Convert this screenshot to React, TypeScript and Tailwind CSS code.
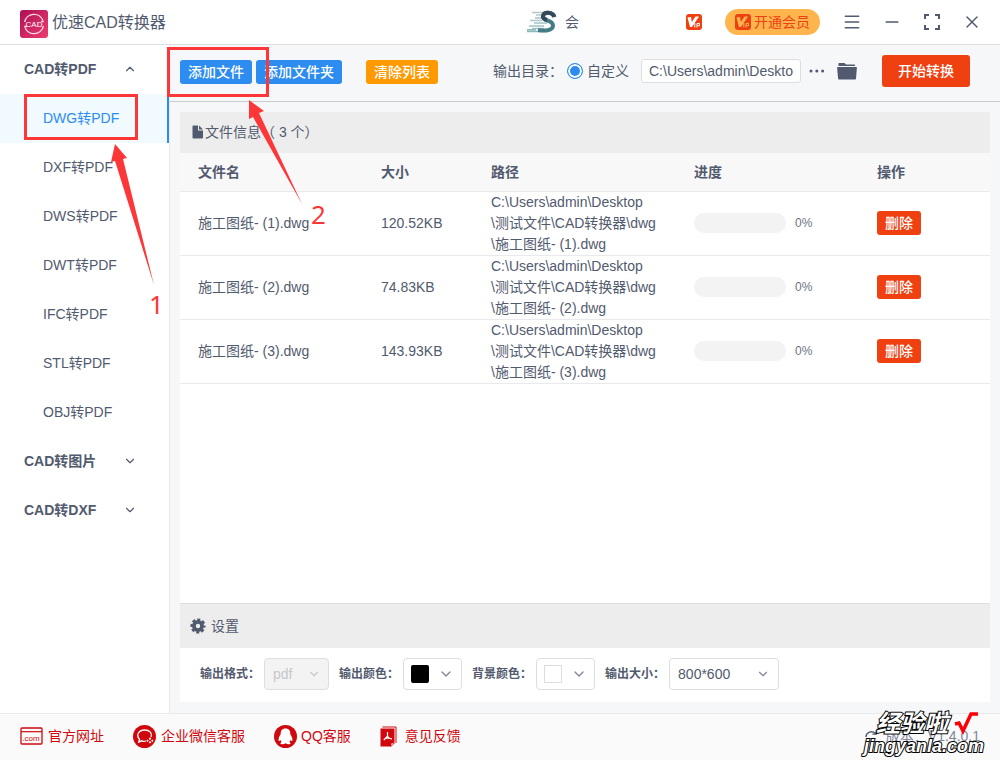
import React from "react";
import { ChevronDown, ChevronUp, Menu, Minus, X } from "lucide-react";

const formats = ["DWG转PDF", "DXF转PDF", "DWS转PDF", "DWT转PDF", "IFC转PDF", "STL转PDF", "OBJ转PDF"];

const files = [
  { name: "施工图纸- (1).dwg", size: "120.52KB", progress: 0 },
  { name: "施工图纸- (2).dwg", size: "74.83KB", progress: 0 },
  { name: "施工图纸- (3).dwg", size: "143.93KB", progress: 0 },
];

const AppLogo = () => (
  <svg width="28" height="28" viewBox="0 0 28 28" className="mt-[3px]" aria-hidden="true">
    <defs>
      <linearGradient id="logo" x1="0" y1="0" x2="1" y2="1">
        <stop offset="0" stopColor="#ad0f55" />
        <stop offset="1" stopColor="#ee3d70" />
      </linearGradient>
    </defs>
    <rect width="28" height="28" rx="3" fill="url(#logo)" />
    <g fill="none" stroke="#fbdce6" strokeWidth="1.3">
      <path d="M4.600 12A9.600 9.600 0 0 1 23 10.500M23.400 16A9.600 9.600 0 0 1 5 17.500" />
      <path d="M21 11.500h2.800M7 16.500H4.200" />
    </g>
    <text x="14" y="17" textAnchor="middle" fontSize="8" fill="#fff">
      CAD
    </text>
  </svg>
);

const Avatar = () => (
  <svg width="30" height="24" viewBox="0 0 30 24" aria-hidden="true">
    <g strokeWidth="1.4" fill="none">
      <path d="M5 2.500h14M9 5h8M3 10.500h12" stroke="#b9c6c9" />
      <path d="M8 8h7M7 13h13M2 16h15M5 18.500h12" stroke="#a4c2c6" />
      <path d="M0 21.500h20M0 19.800h9" stroke="#8fb8bc" />
    </g>
    <path d="M27 7C26 2 16 1 16 6.500C16 11.500 26 10 26 15.500C26 21 17 21 11 20" fill="none" stroke="#447d86" strokeWidth="4" />
    <path d="M27.500 7C26 2 16 1 16 6.500C16 8.500 18 9.500 20 10" fill="none" stroke="#34495a" strokeWidth="4" />
  </svg>
);

const VipIcon = ({ cut }: { cut: string }) => (
  <svg width="16" height="16" viewBox="0 0 16 16" aria-hidden="true">
    <rect width="16" height="16" rx="3" fill="#ef4012" />
    <path d="M1.500 3.500L5 3l.8 5L9.500 2.500h3.500L6 13H4z" fill={cut} />
    <path d="M8.800 9v4.500M11 13.500V9.500h2.500v2.200H11" stroke={cut} strokeWidth="1" fill="none" />
  </svg>
);

const ExpandIcon = () => (
  <svg width="16" height="16" viewBox="0 0 16 16" fill="none" stroke="currentColor" strokeWidth="2" aria-hidden="true">
    <path d="M1 5V1h4M11 1h4v4M15 11v4h-4M5 15H1v-4" />
  </svg>
);

const FolderIcon = () => (
  <svg width="20" height="18" viewBox="0 0 20 18" fill="currentColor" aria-hidden="true">
    <path d="M1.500 4V1.500Q1.500 1 2 1h5.500l1.500 1.500h8.500q.5 0 .5.500v1z" />
    <path d="M.7 5h18.600q.7 0 .6.700L19 16.700q-.1.800-.9.800H2q-.8 0-.9-.8L.100 5.700Q0 5 .700 5z" />
  </svg>
);

const FileIcon = () => (
  <svg width="12" height="14" viewBox="0 0 12 14" fill="currentColor" aria-hidden="true">
    <path d="M1.500.500H6V5.500h5V12.500q0 1-1 1H1.500q-1 0-1-1v-11q0-1 1-1zM7 .500L11 4.500H7z" />
  </svg>
);

const GearIcon = () => (
  <svg width="16" height="16" viewBox="0 0 16 16" aria-hidden="true">
    <circle cx="8" cy="8" r="4.100" fill="none" stroke="currentColor" strokeWidth="3.800" />
    <circle cx="8" cy="8" r="6.400" fill="none" stroke="currentColor" strokeWidth="2.400" strokeDasharray="3 2.026" strokeDashoffset="1.500" />
  </svg>
);

const SiteIcon = () => (
  <svg width="23" height="18" viewBox="0 0 23 18" aria-hidden="true">
    <rect x="1" y="1" width="21" height="16" rx="1" fill="none" stroke="#d0080d" strokeWidth="1.300" />
    <path d="M1 4.700h21" stroke="#d0080d" strokeWidth="1.200" />
    <text x="11" y="14" textAnchor="middle" fontSize="8" fill="#d0080d">
      .com
    </text>
  </svg>
);

const WechatIcon = () => (
  <svg width="23" height="23" viewBox="0 0 23 23" aria-hidden="true">
    <circle cx="11.500" cy="11.500" r="11.500" fill="#d0080d" />
    <path d="M13 16C11 16.600 9.500 16.300 8.500 15.800L5.800 17l.7-2.800C2.500 10 6 5 11.500 5s8 3.500 6.500 7" fill="none" stroke="#fff" strokeWidth="1.300" />
    <path d="M17 12.300l1.300 1.500L17 15l-1.300-1.200zM17 16l1.300 1.300L17 18.600l-1.300-1.300zM14.500 14.500l1.200 1.200-1.200 1.200-1.200-1.200zM19.300 14.500l1.200 1.200-1.200 1.200-1.200-1.200z" fill="#fff" />
  </svg>
);

const QQIcon = () => (
  <svg width="23" height="23" viewBox="0 0 23 23" aria-hidden="true">
    <circle cx="11.500" cy="11.500" r="11.500" fill="#d0080d" />
    <path
      d="M11.500 3.500c-3.600 0-5 2.400-4.800 5.700-1.400 2-2.300 4-2.100 6.200.1 1 1 .7 1.900-.4.300.9.700 1.500 1.300 2-2 .8-1.700 2.200.4 2.200 1.400 0 2.500-.4 3.300-1 .800.600 1.900 1 3.300 1 2.100 0 2.400-1.400.4-2.200.6-.5 1-1.100 1.300-2 .9 1.100 1.800 1.400 1.900.4.200-2.200-.7-4.200-2.100-6.200.200-3.300-1.200-5.700-4.800-5.700z"
      fill="#fff"
    />
  </svg>
);

const FeedbackIcon = () => (
  <svg width="17" height="21" viewBox="0 0 17 21" aria-hidden="true">
    <path d="M2.500 1h13.500v16" fill="none" stroke="#d0080d" strokeWidth="1" />
    <path d="M.500 2.500h14V16l-4 4.500H.500z" fill="#d0080d" />
    <path d="M11 20.500V17h3.500z" fill="#fff" stroke="#d0080d" strokeWidth=".8" />
    <path d="M7.500 6v4.200L3.800 14M7.500 10.200c1 1.800 2.500 2.600 4.500 2.600M5 12.500l4-.7" fill="none" stroke="#fff" strokeWidth="1.200" />
  </svg>
);

const footerLinks = [
  { text: "官方网址", icon: <SiteIcon />, style: "gap-[5px]" },
  { text: "企业微信客服", icon: <WechatIcon />, style: "gap-[5px]" },
  { text: "QQ客服", icon: <QQIcon />, style: "gap-1" },
  { text: "意见反馈", icon: <FeedbackIcon />, style: "gap-2" },
];

const Header = () => (
  <header className="flex h-[45px] items-center border-b border-[#dcdee2] bg-white pl-5 pr-[18px]">
    <AppLogo />
    <h1 className="ml-1 pt-px text-base">优速CAD转换器</h1>
    <div className="ml-auto flex items-center">
      <Avatar />
      <span className="ml-2 w-[15px] text-sm">会</span>
      <span className="ml-[106px]">
        <VipIcon cut="#ffffff" />
      </span>
      <button className="ml-[23px] flex h-[26px] items-center gap-[3px] rounded-full bg-[#ffb54d] px-[10px] text-sm text-[#ef4012]">
        <VipIcon cut="#ffb54d" />
        开通会员
      </button>
      <div className="ml-[22px] flex items-center gap-5">
        <button aria-label="菜单">
          <Menu size={20} strokeWidth={1.8} />
        </button>
        <button aria-label="最小化">
          <Minus size={20} strokeWidth={2} />
        </button>
        <button aria-label="最大化" className="px-0.5">
          <ExpandIcon />
        </button>
        <button aria-label="关闭">
          <X size={20} strokeWidth={1.8} />
        </button>
      </div>
    </div>
  </header>
);

const Sidebar = () => (
  <nav className="w-[170px] shrink-0 border-r border-[#e8eaec] bg-white text-sm">
    <button className="flex h-[49px] w-full items-center justify-between pb-0.5 pl-6 pr-8 font-bold">
      CAD转PDF
      <ChevronUp size={14} />
    </button>
    {formats.map((item, i) => (
      <a
        key={item}
        href="#"
        className={
          i === 0
            ? "flex h-[49px] items-center border-r-2 border-[#2d8cf0] bg-[#f0faff] pb-0.5 pl-[43px] text-[#2d8cf0]"
            : "flex h-[49px] items-center pb-0.5 pl-[43px]"
        }
      >
        {item}
      </a>
    ))}
    {["CAD转图片", "CAD转DXF"].map((item) => (
      <button key={item} className="flex h-[49px] w-full items-center justify-between pb-0.5 pl-6 pr-8 font-bold">
        {item}
        <ChevronDown size={14} />
      </button>
    ))}
  </nav>
);

const Toolbar = () => (
  <div className="flex h-[57px] items-center border-b border-[#c8cacf] pl-[10px] pr-[30px] pb-1 text-sm">
    <button className="mt-0.5 h-6 rounded-[3px] bg-[#2d8cf0] px-2 font-medium text-white">添加文件</button>
    <button className="ml-1 mt-0.5 h-6 rounded-[3px] bg-[#2d8cf0] px-2 font-medium text-white">添加文件夹</button>
    <button className="ml-6 mt-0.5 h-6 rounded-[3px] bg-[#ff9900] px-2 font-medium text-white">清除列表</button>
    <div className="ml-auto flex items-center">
      <span>输出目录：</span>
      <label className="ml-1 flex items-center gap-1">
        <input
          type="radio"
          name="output"
          defaultChecked
          className="size-4 appearance-none rounded-full border border-[#2d8cf0] bg-[#2d8cf0] shadow-[inset_0_0_0_2px_white]"
        />
        自定义
      </label>
      <input
        type="text"
        aria-label="输出目录"
        defaultValue="C:\Users\admin\Deskto"
        className="ml-3 h-6 w-[160px] rounded-[3px] border border-[#dcdee2] bg-white px-[7px]"
      />
      <button aria-label="更多" className="ml-2 text-[#515a6e]">
        <svg width="16" height="4" viewBox="0 0 16 4" fill="currentColor">
          <circle cx="2" cy="2" r="1.500" />
          <circle cx="7.800" cy="2" r="1.500" />
          <circle cx="13.600" cy="2" r="1.500" />
        </svg>
      </button>
      <button aria-label="打开文件夹" className="ml-3">
        <FolderIcon />
      </button>
      <button className="ml-[25px] h-8 w-[88px] rounded-[3px] bg-[#ef4012] font-medium text-white">开始转换</button>
    </div>
  </div>
);

const FileTable = () => (
  <table className="w-full table-fixed text-left text-sm">
    <colgroup>
      <col className="w-[183px]" />
      <col className="w-[110px]" />
      <col className="w-[203px]" />
      <col className="w-[183px]" />
      <col />
    </colgroup>
    <thead>
      <tr className="h-[38px] border-b border-[#e8eaec] bg-[#f8f8f9]">
        {["文件名", "大小", "路径", "进度", "操作"].map((title) => (
          <th key={title} className="px-[18px] font-bold">
            {title}
          </th>
        ))}
      </tr>
    </thead>
    <tbody>
      {files.map((file) => (
        <tr key={file.name} className="h-16 border-b border-[#e8eaec]">
          <td className="whitespace-nowrap pl-[18px]">{file.name}</td>
          <td className="pl-[18px]">{file.size}</td>
          <td className="whitespace-nowrap pl-[18px] leading-[21px]">
            <span className="block">C:\Users\admin\Desktop</span>
            <span className="block">\测试文件\CAD转换器\dwg</span>
            <span className="block">\{file.name}</span>
          </td>
          <td className="pl-[18px]">
            <div className="flex items-center gap-[9px] text-xs text-[#6b7384]">
              <div className="h-5 w-[92px] overflow-hidden rounded-full bg-[#f3f3f3]">
                <div className="h-full bg-[#2d8cf0]" style={{ width: `${file.progress}%` }} />
              </div>
              {file.progress}%
            </div>
          </td>
          <td className="pl-[18px]">
            <button className="h-6 rounded-[3px] bg-[#ef4012] px-2 font-medium text-white">删除</button>
          </td>
        </tr>
      ))}
    </tbody>
  </table>
);

const Settings = () => (
  <section>
    <h2 className="flex h-[45px] items-center gap-[5px] border-t border-[#dcdee2] bg-[#ededed] pl-[10px] text-sm">
      <GearIcon />
      设置
    </h2>
    <div className="flex h-[54px] items-center gap-[10px] bg-white pl-5 pb-0.5 text-xs font-bold">
      <div className="flex items-center gap-1">
        <label htmlFor="format">输出格式：</label>
        <div className="relative text-[#c5c8ce]">
          <select
            id="format"
            disabled
            className="h-8 w-[65px] appearance-none rounded border border-[#dcdee2] bg-[#f3f3f3] px-2 text-sm font-normal opacity-100"
          >
            <option>pdf</option>
          </select>
          <ChevronDown size={14} className="pointer-events-none absolute right-2 top-[9px]" />
        </div>
      </div>
      <div className="flex items-center gap-1">
        <label htmlFor="color">输出颜色：</label>
        <button id="color" className="flex h-8 w-[59px] items-center justify-between rounded border border-[#dcdee2] px-[7px]">
          <span className="size-[18px] rounded-xs bg-black" />
          <ChevronDown size={16} className="text-[#808695]" />
        </button>
      </div>
      <div className="flex items-center gap-1">
        <label htmlFor="background">背景颜色：</label>
        <button id="background" className="flex h-8 w-[59px] items-center justify-between rounded border border-[#dcdee2] px-[7px]">
          <span className="size-[18px] border border-[#dcdee2] bg-white" />
          <ChevronDown size={16} className="text-[#808695]" />
        </button>
      </div>
      <div className="flex items-center gap-1">
        <label htmlFor="size">输出大小：</label>
        <div className="relative">
          <select id="size" className="h-8 w-[110px] appearance-none rounded border border-[#dcdee2] bg-white px-2 text-sm font-normal">
            <option>800*600</option>
          </select>
          <ChevronDown size={14} className="pointer-events-none absolute right-[9px] top-[9px] text-[#808695]" />
        </div>
      </div>
    </div>
  </section>
);

const Footer = () => (
  <footer className="relative flex h-[47px] items-center border-t border-[#e8eaec] bg-[#fafafa] px-5 pb-0.5 text-sm">
    <div className="flex items-center gap-[29px] text-[#d0080d]">
      {footerLinks.map((link) => (
        <a key={link.text} href="#" className={`flex items-center ${link.style}`}>
          {link.icon}
          {link.text}
        </a>
      ))}
    </div>
    <div className="ml-auto flex items-center gap-2 text-[#80869b]">
      <svg width="13" height="14" viewBox="0 0 14 14" fill="none" stroke="#515a6e" strokeWidth="1.5" aria-hidden="true">
        <path d="M1 8a6 6 0 0 1 10-4M12 1v4H8" />
      </svg>
      <span>版本：V1.4.0.1</span>
    </div>
    <div className="absolute bottom-1 right-4 flex flex-col font-bold italic text-white [-webkit-text-stroke:2px_black] [paint-order:stroke_fill]">
      <span className="flex items-center pl-3 text-2xl leading-6">
        经验啦
        <svg width="25" height="24" viewBox="0 0 25 24" fill="none" stroke="#fb0007" strokeWidth="3.5" className="ml-1.5" aria-hidden="true">
          <path d="M1 12l4-1 4 8L17 2h7" />
        </svg>
      </span>
      <span className="text-lg leading-5">jingyanla.com</span>
    </div>
  </footer>
);

const Annotations = () => (
  <div className="pointer-events-none absolute left-0 top-0">
    <svg width="340" height="330" viewBox="0 0 340 330" fill="#fd3638" aria-hidden="true">
      <g fill="none" stroke="#fd3638" strokeWidth="3">
        <rect x="25.500" y="95.500" width="111" height="43" />
        <rect x="168.500" y="48.500" width="99" height="47" />
      </g>
      <path d="M115 144L127 158L123 159L154 285L115 161L111 162z" />
      <path d="M249 100L264 111L259 113L302 204L253 117L249 119z" />
      <g fontFamily="Noto Sans, sans-serif" fontSize="26">
        <text x="149" y="314">1</text>
        <text x="311" y="224">2</text>
      </g>
    </svg>
  </div>
);

export default function App() {
  return (
    <div className="relative flex min-h-screen flex-col bg-[#f5f7f9] font-['Liberation_Sans','Noto_Sans_CJK_SC',sans-serif] text-[#515a6e]">
      <Header />
      <div className="flex grow">
        <Sidebar />
        <div className="flex min-w-0 grow flex-col">
          <Toolbar />
          <main className="flex grow flex-col p-[10px] pb-[11px]">
            <h2 className="flex h-[41px] items-center gap-px bg-[#ededed] pb-0.5 pl-3 text-sm">
              <FileIcon />
              文件信息（ 3 个）
            </h2>
            <div className="grow bg-white">
              <FileTable />
            </div>
            <Settings />
          </main>
        </div>
      </div>
      <Footer />
      <Annotations />
    </div>
  );
}
